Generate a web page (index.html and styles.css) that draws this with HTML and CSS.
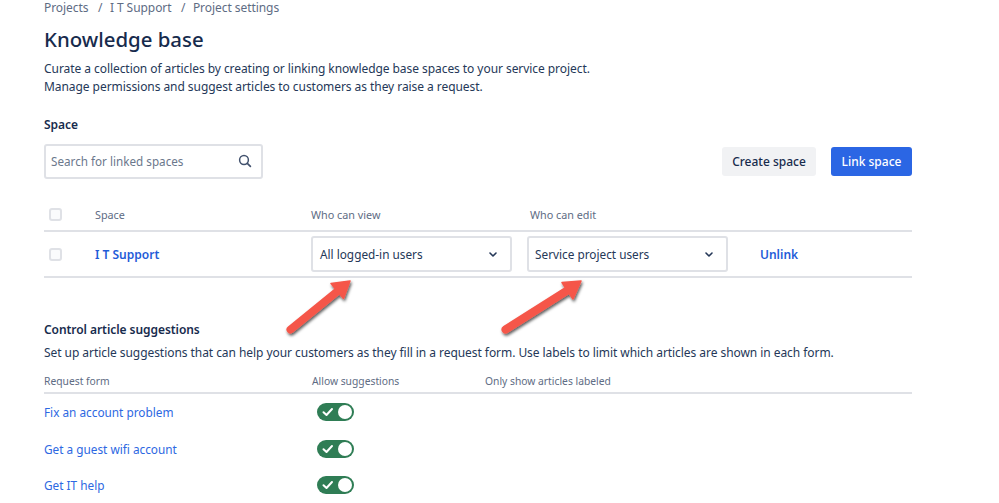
FILE: index.html
```html
<!DOCTYPE html>
<html lang="en">
<head>
<meta charset="utf-8">
<title>Knowledge base</title>
<link rel="stylesheet" href="styles.css">
</head>
<body>
<main class="page">
  <nav class="crumbs"><span>Projects</span><span class="sep">/</span><span>I T Support</span><span class="sep">/</span><span>Project settings</span></nav>
  <h1 class="title">Knowledge base</h1>
  <p class="desc">Curate a collection of articles by creating or linking knowledge base spaces to your service project.<br>Manage permissions and suggest articles to customers as they raise a request.</p>
  <h2 class="label">Space</h2>
  <div class="toolbar">
    <div class="search">
      <span class="placeholder">Search for linked spaces</span>
      <svg class="search-icon" width="14" height="14" viewBox="0 0 14 14"><circle cx="6" cy="6" r="4.4" fill="none" stroke="#42526e" stroke-width="1.5"/><path d="M9.3 9.3L12.4 12.4" stroke="#42526e" stroke-width="1.7" stroke-linecap="round"/></svg>
    </div>
    <div class="actions">
      <button class="btn btn-default">Create space</button>
      <button class="btn btn-primary">Link space</button>
    </div>
  </div>
  <div class="grid grid-head">
    <span class="check"></span>
    <span>Space</span>
    <span>Who can view</span>
    <span class="edit-head">Who can edit</span>
  </div>
  <div class="grid grid-row">
    <span class="check"></span>
    <a class="space-link">I T Support</a>
    <div class="select"><span>All logged-in users</span><svg width="10" height="7" viewBox="0 0 10 7"><path d="M2 2L5 5L8 2" fill="none" stroke="#253858" stroke-width="1.6" stroke-linecap="round" stroke-linejoin="round"/></svg></div>
    <div class="select"><span>Service project users</span><svg width="10" height="7" viewBox="0 0 10 7"><path d="M2 2L5 5L8 2" fill="none" stroke="#253858" stroke-width="1.6" stroke-linecap="round" stroke-linejoin="round"/></svg></div>
    <a class="unlink">Unlink</a>
  </div>
  <h2 class="label control">Control article suggestions</h2>
  <p class="control-desc">Set up article suggestions that can help your customers as they fill in a request form. Use labels to limit which articles are shown in each form.</p>
  <div class="forms forms-head">
    <span>Request form</span>
    <span>Allow suggestions</span>
    <span>Only show articles labeled</span>
  </div>
  <div class="forms forms-row"><a>Fix an account problem</a><span class="toggle"><svg width="14" height="12" viewBox="0 0 14 12"><path d="M2.5 6.2L5.5 9L11 3" fill="none" stroke="#fff" stroke-width="2" stroke-linecap="round" stroke-linejoin="round"/></svg><i class="knob"></i></span></div>
  <div class="forms forms-row"><a>Get a guest wifi account</a><span class="toggle"><svg width="14" height="12" viewBox="0 0 14 12"><path d="M2.5 6.2L5.5 9L11 3" fill="none" stroke="#fff" stroke-width="2" stroke-linecap="round" stroke-linejoin="round"/></svg><i class="knob"></i></span></div>
  <div class="forms forms-row"><a>Get IT help</a><span class="toggle"><svg width="14" height="12" viewBox="0 0 14 12"><path d="M2.5 6.2L5.5 9L11 3" fill="none" stroke="#fff" stroke-width="2" stroke-linecap="round" stroke-linejoin="round"/></svg><i class="knob"></i></span></div>
</main>
<svg class="arrows" width="999" height="503" viewBox="0 0 999 503">
  <defs><filter id="sh" x="-30%" y="-30%" width="160%" height="160%"><feDropShadow dx="1" dy="2" stdDeviation="1.5" flood-color="#000" flood-opacity="0.65"/></filter></defs>
  <g filter="url(#sh)">
    <path d="M290.5 329.5L339 290" stroke="#f5574a" stroke-width="8" stroke-linecap="round"/>
    <path d="M350 281L331 283.5L343.5 298.5Z" fill="#f5574a" stroke="#f5574a" stroke-width="1.5" stroke-linejoin="round"/>
    <path d="M505.5 329.5L568 290" stroke="#f5574a" stroke-width="8" stroke-linecap="round"/>
    <path d="M581 281L562 282.5L573 299Z" fill="#f5574a" stroke="#f5574a" stroke-width="1.5" stroke-linejoin="round"/>
  </g>
</svg>
</body>
</html>
```
FILE: styles.css
```css
* { box-sizing: border-box; }
html, body { margin: 0; padding: 0; height: 503px; overflow: hidden; background: #fff; }
body { font-family: "Noto Sans", sans-serif; font-size: 12px; color: #172b4d; }
.page { width: 868px; margin-left: 44px; }
.crumbs { display: flex; height: 15px; line-height: 15px; color: #5e6c84; letter-spacing: -0.06px; }
.sep { margin: 0 7.5px 0 9.5px; }
.title { margin: 12px 0 0; font-size: 20.4px; line-height: 25px; font-weight: 500; color: #172b4d; height: 25px; }
.desc { margin: 8px 0 0; line-height: 18px; color: #253858; letter-spacing: -0.06px; }
.label { margin: 0; font-size: 12px; line-height: 16px; font-weight: 600; color: #172b4d; letter-spacing: -0.06px; }
.desc + .label { margin-top: 21px; }
.toolbar { display: flex; justify-content: space-between; align-items: center; margin-top: 11px; height: 35px; }
.search { width: 219px; height: 35px; border: 2px solid #dfe1e6; border-radius: 3px; display: flex; align-items: center; justify-content: space-between; padding: 0 9px 2px 5px; }
.placeholder { color: #6b778c; font-size: 11.7px; }
.actions { display: flex; gap: 15px; }
.btn { height: 29px; border: 0; border-radius: 3px; font: 500 12px "Noto Sans", sans-serif; padding: 0; }
.btn-default { width: 94px; background: #f1f2f4; color: #172b4d; }
.btn-primary { width: 81px; background: #2b66e4; color: #fff; }
.grid { display: grid; grid-template-columns: 51px 216px 216px 233px 1fr; align-items: center; }
.grid-head { margin-top: 20px; height: 33px; padding-top: 1px; padding-bottom: 1px; color: #5e6c84; font-size: 10.8px; border-bottom: 2px solid #dfe1e6; }
.edit-head { margin-left: 3px; }
.grid-row { height: 46px; border-bottom: 2px solid #dfe1e6; }
.check { width: 13px; height: 13px; margin-left: 5px; border: 2px solid #dfe1e6; border-radius: 3px; background: #fafbfc; }
.space-link, .unlink { color: #1f5cd8; font-weight: 600; }
.select { width: 201px; height: 36px; border: 2px solid #dfe1e6; border-radius: 3px; display: flex; align-items: center; justify-content: space-between; padding: 0 12px 0 7px; color: #253858; font-size: 11.8px; }
.select + .select { padding-left: 6px; }
.control { margin-top: 44px; }
.control-desc { margin: 7px 0 0; line-height: 16px; color: #253858; letter-spacing: -0.055px; }
.forms { display: grid; grid-template-columns: 268px 173px 1fr; align-items: center; }
.forms-head { margin-top: 9px; height: 24px; padding-bottom: 1px; color: #5e6c84; font-size: 10.3px; border-bottom: 2px solid #dfe1e6; }
.forms-row { height: 36.5px; color: #2d68e2; font-size: 11.8px; }
.toggle { width: 37px; height: 18px; margin-left: 5px; border-radius: 9px; background: #2f7d55; position: relative; display: block; }
.toggle svg { position: absolute; left: 4px; top: 3px; }
.knob { position: absolute; right: 2px; top: 2px; width: 14px; height: 14px; border-radius: 50%; background: #fff; }
.arrows { position: absolute; left: 0; top: 0; pointer-events: none; }
```
